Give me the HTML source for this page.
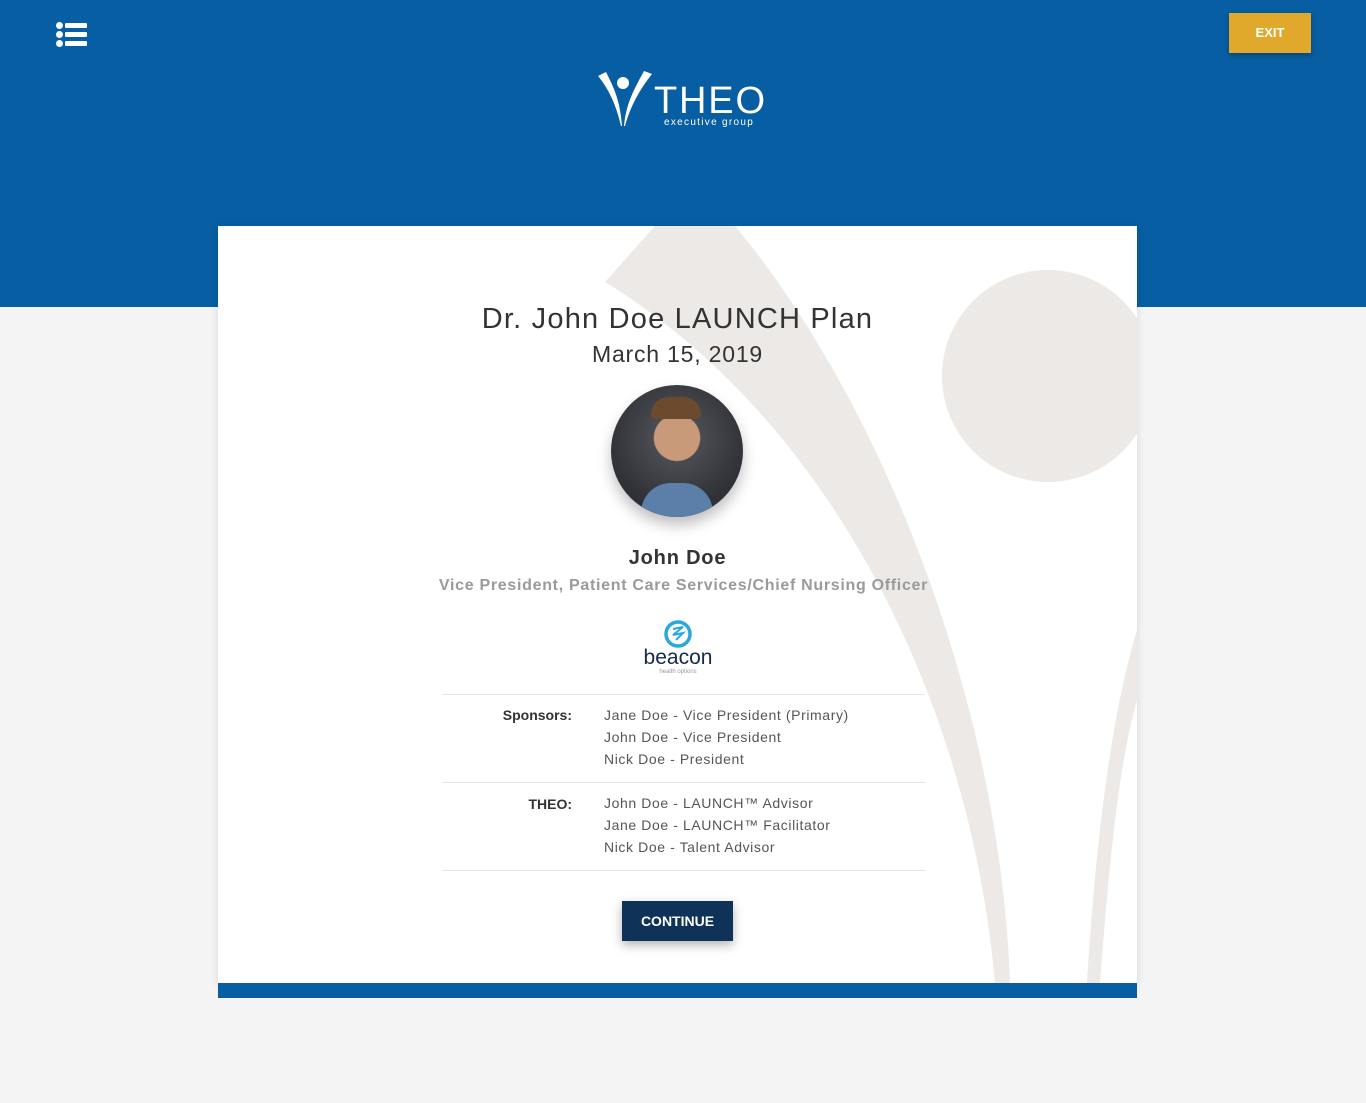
<!DOCTYPE html>
<html><head><meta charset="utf-8"><style>
body{margin:0;width:1366px;height:1103px;background:#f4f4f4;font-family:"Liberation Sans",sans-serif;position:relative;overflow:hidden}
.hdr{position:absolute;left:0;top:0;width:1366px;height:307px;background:#075ea3}
.exit{position:absolute;left:1229px;top:13px;width:82px;height:40px;background:#e0a92b;color:#fff;font-size:13px;font-weight:bold;text-align:center;line-height:40px;box-shadow:0 2px 5px rgba(0,0,0,.3)}
.card{position:absolute;left:218px;top:226px;width:919px;height:757px;background:#fff;overflow:hidden;box-shadow:0 2px 8px rgba(0,0,0,.12)}
.bar{position:absolute;left:218px;top:983px;width:919px;height:15px;background:#075ea3}
.c{position:absolute;left:0;width:919px;text-align:center;color:#333}
.row{position:absolute;left:224px;width:483px;border-top:1px solid #e6e6e6}
.lab{position:absolute;width:130px;text-align:right;font-size:14px;font-weight:bold;color:#333}
.val{position:absolute;left:162px;font-size:14px;color:#555;line-height:22px;letter-spacing:.6px}
.btn{position:absolute;left:404px;top:675px;width:111px;height:40px;background:#0f3358;color:#fff;font-size:14px;font-weight:bold;text-align:center;line-height:40px;box-shadow:0 4px 10px rgba(0,0,0,.3)}
</style></head><body>
<div class="hdr">
<svg style="position:absolute;left:56px;top:22px" width="32" height="25" viewBox="0 0 32 25"><g fill="#fff"><circle cx="3.5" cy="3.5" r="3.5"/><circle cx="3.5" cy="12.5" r="3.5"/><circle cx="3.5" cy="21.5" r="3.5"/><rect x="9" y="1" width="22" height="5" rx="1"/><rect x="9" y="10" width="22" height="5" rx="1"/><rect x="9" y="19" width="22" height="5" rx="1"/></g></svg>
<svg style="position:absolute;left:596px;top:70px" width="180" height="60" viewBox="0 0 180 60"><g fill="#fff"><path d="M2,6 L10,2 C18,18 24,30 26,56 L25,56 C20,34 12,18 2,6Z"/><path d="M56,4 L48,1 C40,16 30,32 28,56 L29,56 C35,34 45,18 56,4Z"/><circle cx="27" cy="13" r="6"/></g><text x="58" y="43" fill="#fff" font-size="38" font-family="Liberation Sans" letter-spacing="1" textLength="112">THEO</text><text x="68" y="55" fill="#fff" font-size="10" letter-spacing="1.3">executive group</text></svg>
<div class="exit">EXIT</div>
</div>
<div class="card">
<svg style="position:absolute;left:0;top:0" width="919" height="757"><g fill="#ece9e7" transform="translate(-218,-226)"><path d="M605,282 L655,226 L735,226 C880,400 1000,700 1010,983 L995,983 C970,700 830,420 605,282Z"/><path d="M1137,630 C1110,720 1095,850 1087,983 L1100,983 C1110,850 1120,760 1137,700Z"/><circle cx="1048" cy="376" r="106"/></g></svg>
<div class="c" style="top:77px;font-size:29px;letter-spacing:1.2px">Dr. John Doe LAUNCH Plan</div>
<div class="c" style="top:115px;font-size:23px;letter-spacing:.8px">March 15, 2019</div>
<div style="position:absolute;left:393px;top:159px;width:132px;height:132px;border-radius:50%;background:radial-gradient(circle at 50% 40%,#c99a7a 0 22%,#4a4c52 23%,#2e3036 70%);box-shadow:0 8px 14px rgba(0,0,0,.25);overflow:hidden"><div style="position:absolute;left:30px;top:98px;width:72px;height:40px;background:#5b7fa8;border-radius:30px 30px 0 0"></div><div style="position:absolute;left:40px;top:12px;width:50px;height:22px;background:#6b4a2e;border-radius:20px 20px 5px 5px"></div></div>
<div class="c" style="top:321px;font-size:20px;font-weight:bold;letter-spacing:.8px">John Doe</div>
<div class="c" style="top:351px;font-size:16px;font-weight:bold;color:#9a9a9a;left:6px;letter-spacing:.7px">Vice President, Patient Care Services/Chief Nursing Officer</div>
<svg style="position:absolute;left:420px;top:392px" width="80" height="58"><circle cx="40" cy="16" r="12" fill="none" stroke="#29a8e0" stroke-width="3.5"/><path d="M35,11 L45,9 L35,17 L45,15 L38,22" stroke="#29a8e0" stroke-width="2" fill="none"/><text x="40" y="46" text-anchor="middle" font-size="21" fill="#14294b">beacon</text><text x="40" y="55" text-anchor="middle" font-size="6" fill="#999">health options</text></svg>
<div class="row" style="top:468px;height:88px"><div class="lab" style="top:12px;left:0">Sponsors:</div><div class="val" style="top:9px">Jane Doe - Vice President (Primary)<br>John Doe - Vice President<br>Nick Doe - President</div></div>
<div class="row" style="top:556px;height:87px;border-bottom:1px solid #e6e6e6"><div class="lab" style="top:13px;left:0">THEO:</div><div class="val" style="top:9px">John Doe - LAUNCH™ Advisor<br>Jane Doe - LAUNCH™ Facilitator<br>Nick Doe - Talent Advisor</div></div>
<div class="btn">CONTINUE</div>
</div>
<div class="bar"></div>
</body></html>
